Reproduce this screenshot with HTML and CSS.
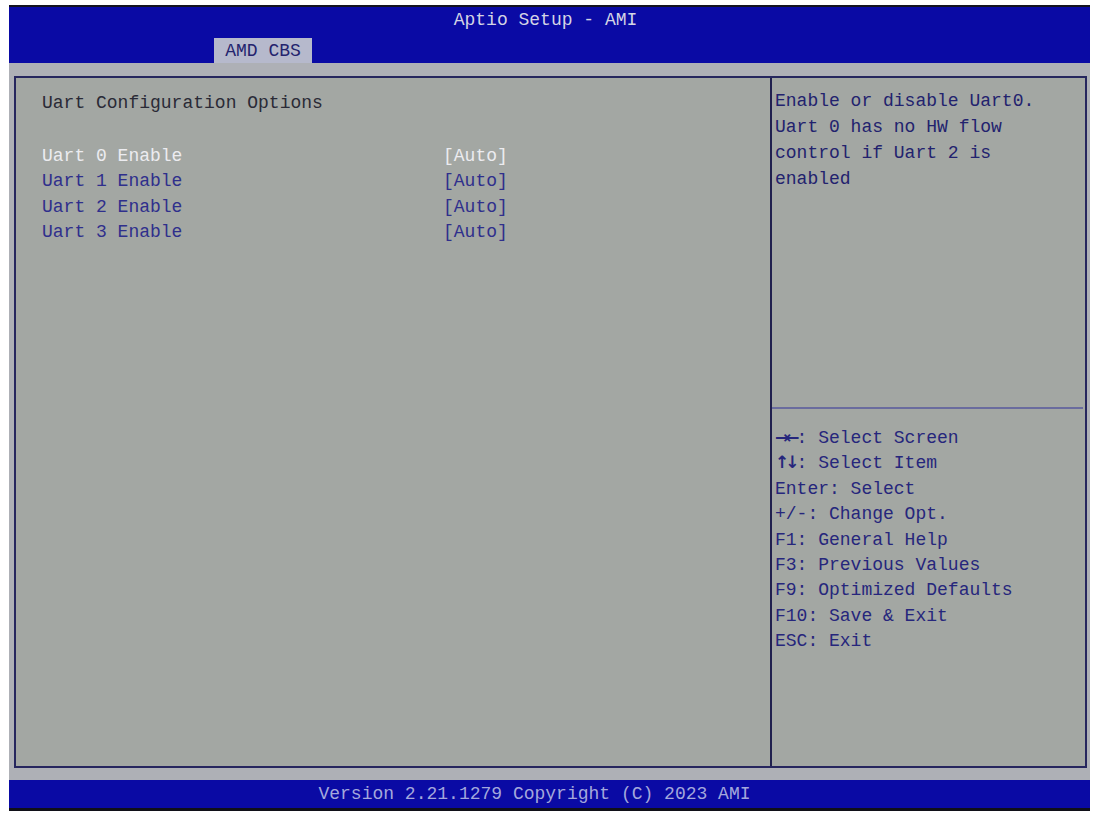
FILE: index.html
```html
<!DOCTYPE html>
<html>
<head>
<meta charset="utf-8">
<link rel="stylesheet" href="styles.css">
</head>
<body>
<div class="screen">
  <div class="header">
    <div class="title">Aptio Setup - AMI</div>
    <div class="tab">AMD CBS</div>
  </div>
  <div class="panels">
    <div class="main">
      <div class="heading">Uart Configuration Options</div>
      <div class="options">
        <div class="opt sel">Uart 0 Enable</div><div class="val sel">[Auto]</div>
        <div class="opt">Uart 1 Enable</div><div class="val">[Auto]</div>
        <div class="opt">Uart 2 Enable</div><div class="val">[Auto]</div>
        <div class="opt">Uart 3 Enable</div><div class="val">[Auto]</div>
      </div>
    </div>
    <div class="side">
      <div class="help">
        <div>Enable or disable Uart0.</div>
        <div>Uart 0 has no HW flow</div>
        <div>control if Uart 2 is</div>
        <div>enabled</div>
      </div>
      <div class="keys">
        <div><span class="arrows">→←</span>: Select Screen</div>
        <div><span class="arrows">↑↓</span>: Select Item</div>
        <div>Enter: Select</div>
        <div>+/-: Change Opt.</div>
        <div>F1: General Help</div>
        <div>F3: Previous Values</div>
        <div>F9: Optimized Defaults</div>
        <div>F10: Save &amp; Exit</div>
        <div>ESC: Exit</div>
      </div>
    </div>
  </div>
  <div class="footer">Version 2.21.1279 Copyright (C) 2023 AMI</div>
</div>
</body>
</html>
```

FILE: styles.css
```css
html, body {
  margin: 0;
  padding: 0;
  background: #ffffff;
}
body {
  font-family: "Liberation Mono", "DejaVu Sans Mono", monospace;
  font-size: 18px;
}
.screen {
  margin: 5px 0 0 9px;
  width: 1081px;
  border-top: 2px solid #141420;
  border-bottom: 3px solid #101018;
  background: #aeb0b6;
  display: flex;
  flex-direction: column;
}
.header {
  background: #0a0aa4;
  height: 56px;
  display: flex;
  flex-direction: column;
}
.title {
  height: 26px;
  line-height: 26px;
  text-align: center;
  color: #d4d4e4;
  padding-right: 8px;
}
.tab {
  margin-top: 5px;
  margin-left: 205px;
  width: 98px;
  height: 25px;
  line-height: 26px;
  background: #b6b9cc;
  color: #24246e;
  text-align: center;
}
.panels {
  margin: 13px 3px 12px 5px;
  height: 688px;
  border: 2px solid #26265e;
  background: #a3a7a3;
  display: flex;
}
.main {
  width: 756px;
  border-right: 2px solid #20204e;
  padding: 13px 0 0 26px;
  box-sizing: border-box;
  line-height: 25.5px;
}
.heading {
  color: #2a2a36;
  margin-bottom: 27px;
}
.options {
  display: grid;
  grid-template-columns: 401px auto;
  line-height: 25.5px;
}
.opt, .val {
  color: #2f2f8c;
}
.sel {
  color: #ececf0;
}
.side {
  flex: 1;
  display: flex;
  flex-direction: column;
}
.help {
  height: 331px;
  padding: 10px 0 0 3px;
  box-sizing: border-box;
  line-height: 26px;
  color: #22226e;
  border-bottom: 2px solid #6a6c9e;
  margin-right: 2px;
}
.keys {
  padding: 17px 0 0 3px;
  line-height: 25.4px;
  color: #26267c;
}
.arrows {
  font-family: "DejaVu Sans", sans-serif;
  font-weight: bold;
  font-size: 17px;
  letter-spacing: -4px;
  display: inline-block;
  width: 21.6px;
  line-height: 20px;
  vertical-align: baseline;
}
.footer {
  background: #0a0aa4;
  height: 28px;
  line-height: 28px;
  text-align: center;
  color: #a4a8dc;
  padding-right: 30px;
}
```
